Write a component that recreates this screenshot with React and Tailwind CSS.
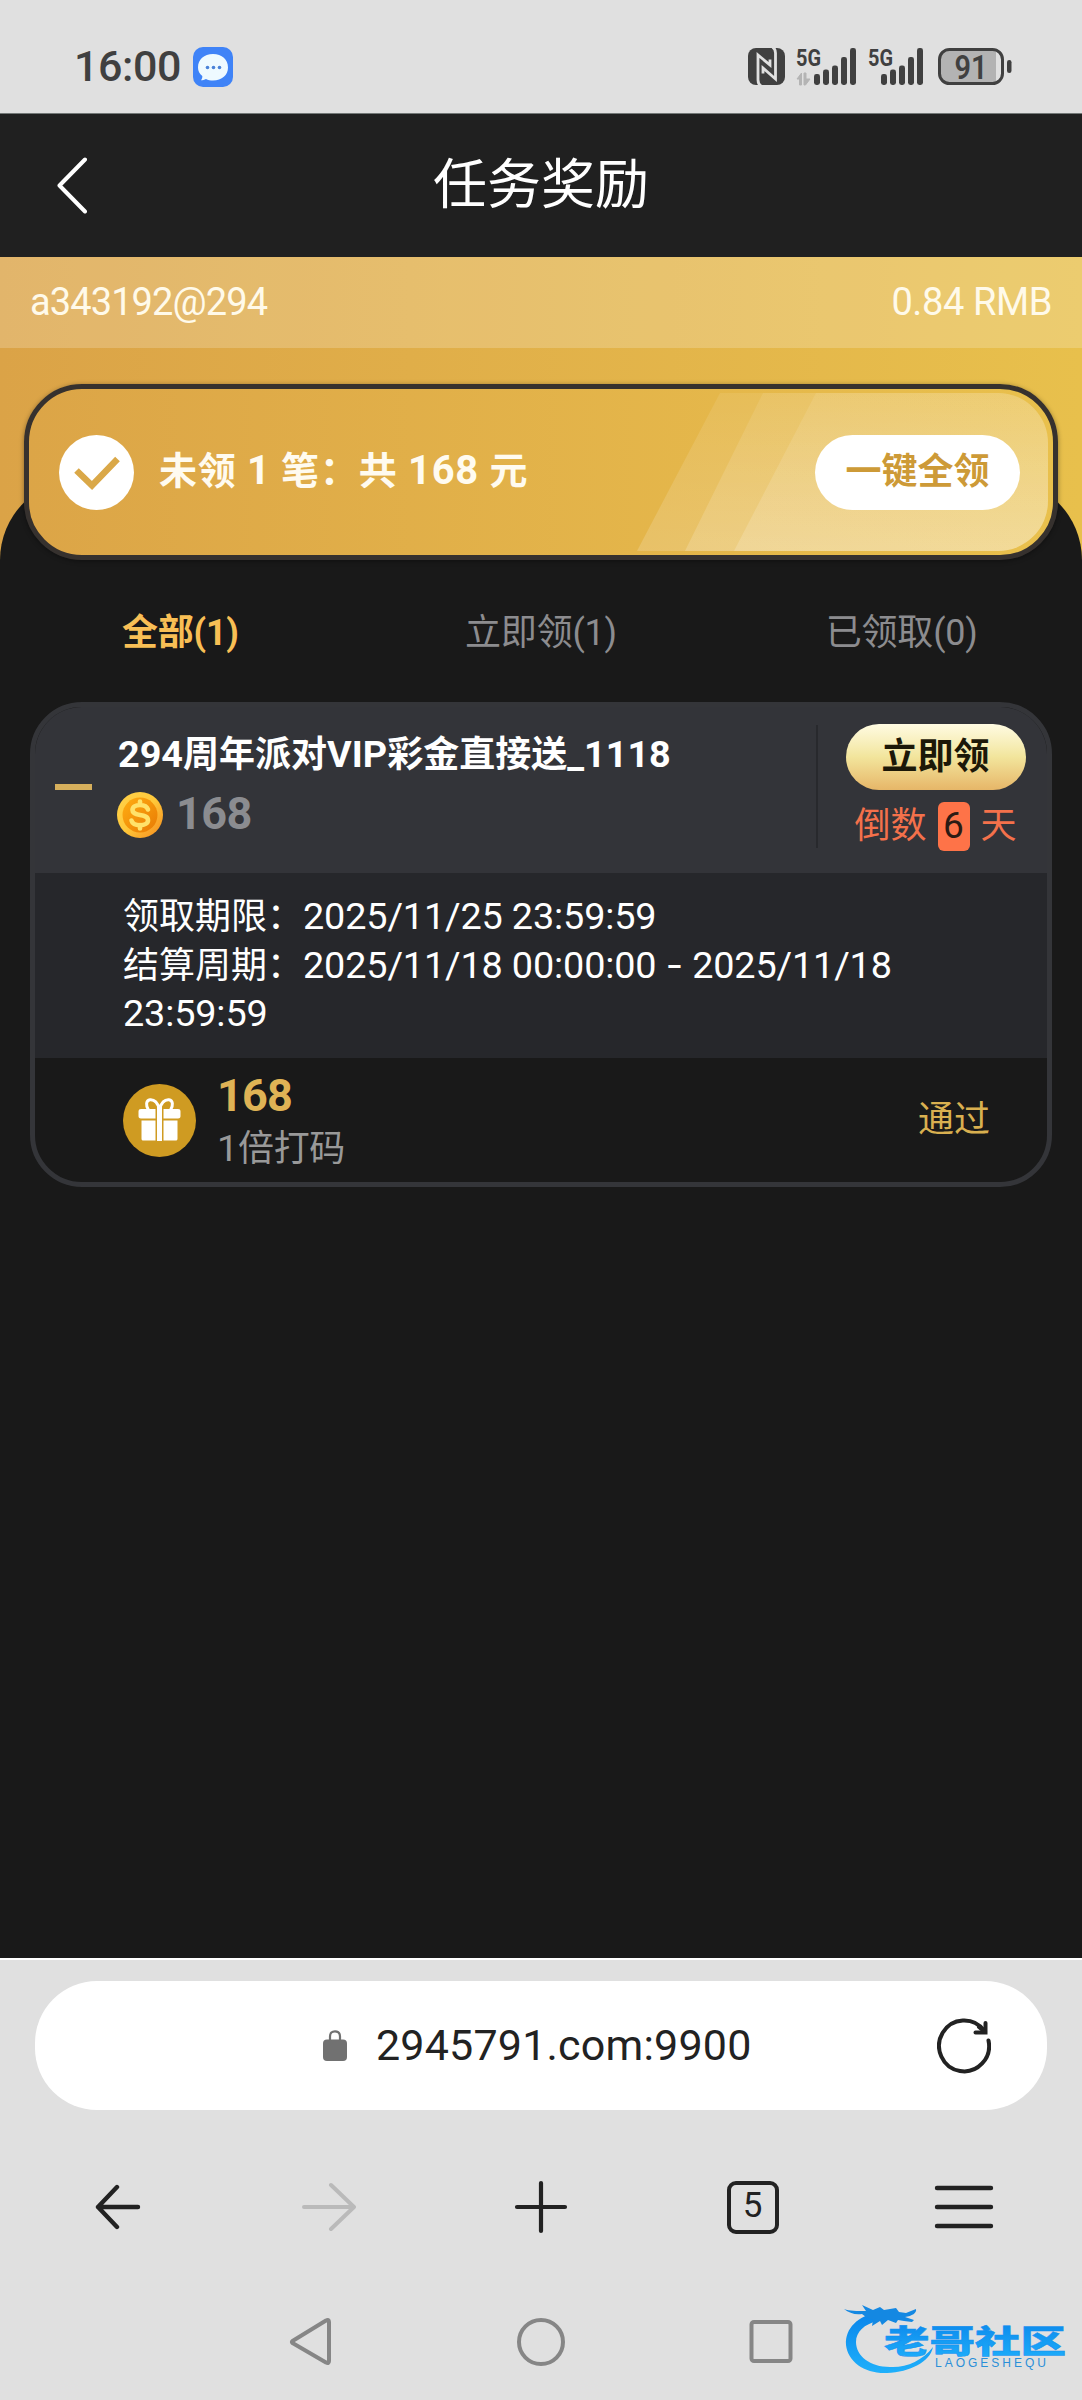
import React, { useState } from 'react';

const tabs = [
    { id: 'all', label: '全部', count: 1 },
    { id: 'pending', label: '立即领', count: 1 },
    { id: 'received', label: '已领取', count: 0 },
];

const reward = {
    amount: 168,
    daysLeft: 6,
    deadline: '2025/11/25 23:59:59',
    periodStart: '2025/11/18 00:00:00',
    periodEnd: '2025/11/18 23:59:59',
};

// x offset, height of each bar
const signalBars = [
    [0, 11],
    [9, 15.5],
    [18, 19.5],
    [27, 28],
    [36, 37],
];

const SignalIcon = ({ offset, data }) => (
    <svg className="h-[37px] w-[61px] shrink-0 overflow-visible" viewBox="0 0 61 37" fill="#404040">
        <text x="0" y="18" fontSize="24" fontWeight="700" fontFamily="Roboto, sans-serif" textLength="25" lengthAdjust="spacingAndGlyphs">5G</text>
        {signalBars.map(([x, h]) => (
            <rect key={x} x={x + offset} y={37 - h} width="6" height={h} rx="2.4" />
        ))}
        {data && <path d="M1 31 L5.5 25 V37 H3.5 V31 Z M8 25 H10 V31 H14 L9.5 37 H8 Z" fill="#b4b4b4" stroke="#b4b4b4" />}
    </svg>
);

const StatusBar = () => (
    <div className="flex h-[114px] items-center border-b border-[#737877] bg-[#e0e0e0] pt-[20px] pr-[70px] pl-[74px]">
        <span className="w-[119px] text-[43px] leading-none font-medium tracking-[-0.4px] text-[#404040]">16:00</span>
        <svg className="h-10 w-10" viewBox="0 0 40 40">
            <rect width="40" height="40" rx="10" fill="#3f83f7" />
            <path d="M20 7 C29 7 35 12.500 35 20.500 C35 28 29 33.500 20 33.500 C17.500 33.500 15 33 13 32 C11.500 32.800 9.500 33.300 8 33.300 C9 32 9.500 30.500 9.300 29 C6.500 26.800 5 24 5 20.500 C5 12.500 11 7 20 7 Z" fill="#eefaff" />
            <circle cx="14.500" cy="20.500" r="1.800" fill="#4a82d8" />
            <circle cx="20.500" cy="20.500" r="1.800" fill="#4a82d8" />
            <circle cx="26.500" cy="20.500" r="1.800" fill="#4a82d8" />
        </svg>
        <div className="ml-auto flex items-center">
            <svg className="mr-[11px] h-[37px] w-[37px]" viewBox="0 0 37 37" fill="none">
                <rect width="37" height="37" rx="8" fill="#404040" />
                <path d="M13 38 C10.500 36.500 10 34.500 10 32 V7 L22 17 V11.500" stroke="#e0e0e0" strokeWidth="2.800" />
                <path d="M24.500 -1 C27 0.500 27.500 2.500 27.500 5 V31 L15 20 V25.500" stroke="#e0e0e0" strokeWidth="2.800" />
            </svg>
            <SignalIcon offset={18} data />
            <div className="ml-[11px] flex"><SignalIcon offset={13} /></div>
            <svg className="ml-[9px] h-[37px] w-[74px]" viewBox="0 0 74 37">
                <path d="M12 1.500 H58 V35.500 H12 C5 35.500 1.500 32 1.500 26 V11 C1.500 5 5 1.500 12 1.500 Z" fill="#b3b3b3" />
                <rect x="1.500" y="1.500" width="63" height="34" rx="10" fill="none" stroke="#404040" strokeWidth="3" />
                <rect x="69" y="12" width="4.500" height="13" rx="2.200" fill="#404040" />
                <text x="33" y="30.500" textAnchor="middle" fontSize="34" fontWeight="600" fontFamily="Roboto, sans-serif" fill="#404040" textLength="33" lengthAdjust="spacingAndGlyphs">91</text>
            </svg>
        </div>
    </div>
);

const Header = () => (
    <header className="flex h-[143px] items-center bg-[#202020] pr-[87px] pl-[57px] text-white">
        <svg className="h-[57px] w-[30px]" viewBox="0 0 30 57" fill="none" stroke="currentColor" strokeWidth="4" strokeLinecap="round" strokeLinejoin="round">
            <path d="M28 2.500 L2.500 28.500 L28 54.500" />
        </svg>
        <h1 className="flex-1 text-center text-[54px] leading-none">任务奖励</h1>
    </header>
);

const ClaimBanner = () => (
    <div className="relative mx-6 flex h-[176px] items-center overflow-hidden rounded-[58px] border-[5px] border-[#36312e] bg-linear-to-r from-[#dca547] to-[#e9c04c] pr-[33px] pl-[30px] shadow-[0_1px_5px_rgba(0,0,0,0.4)]">
        <svg className="absolute top-[4px] right-[3px] h-[158px] w-[416px]" viewBox="0 0 416 158">
            <defs>
                <linearGradient id="shine" x1="0" y1="0" x2="0" y2="1">
                    <stop offset="0" stopColor="#fff" stopOpacity="0.08" />
                    <stop offset="1" stopColor="#fff" stopOpacity="0.17" />
                </linearGradient>
                <clipPath id="round">
                    <rect x="-100" width="514" height="158" rx="50" />
                </clipPath>
            </defs>
            <g fill="url(#shine)" clipPath="url(#round)">
                <path d="M86 0 H416 V158 H3 Z" />
                <path d="M129 0 H416 V158 H51 Z" />
                <path d="M182 0 H416 V158 H100 Z" />
            </g>
        </svg>
        <svg className="h-[75px] w-[75px]" viewBox="0 0 75 75">
            <circle cx="37.500" cy="37.500" r="37.500" fill="#fff" />
            <path d="M17.500 35.500 L33 50.500 L58.500 24" fill="none" stroke="#daa848" strokeWidth="6.500" />
        </svg>
        <p className="ml-[25px] pb-[3px] text-[38px] leading-none font-bold tracking-[0.85px] text-[#fffbf0]">
            未领 <Num>1</Num> 笔：共 <Num>168</Num> 元
        </p>
        <button className="relative ml-auto h-[75px] w-[205px] rounded-full bg-white text-[36px] leading-none font-bold text-[#cd9a37]">
            一键全领
        </button>
    </div>
);

// latin digits sit a touch larger than the chinese text around them
const Num = ({ children }) => <span className="text-[1.05em] leading-none">{children}</span>;

const CoinIcon = () => (
    <svg className="h-[46px] w-[46px]" viewBox="0 0 46 46">
        <defs>
            <linearGradient id="rim" x1="0" y1="0" x2="1" y2="1">
                <stop offset="0" stopColor="#ffd24a" />
                <stop offset="0.5" stopColor="#ffc83a" />
                <stop offset="1" stopColor="#f58a1c" />
            </linearGradient>
            <linearGradient id="face" x1="0" y1="0" x2="1" y2="1">
                <stop offset="0" stopColor="#ffae12" />
                <stop offset="1" stopColor="#e87a04" />
            </linearGradient>
        </defs>
        <circle cx="23" cy="23" r="23" fill="url(#rim)" />
        <circle cx="23" cy="23" r="17.500" fill="url(#face)" />
        <path d="M23 9.500 V13 M23 33 V36.500 M31 17.500 C30 14.500 27 13 23 13 C18.500 13 15.500 15 15.500 18 C15.500 21.500 19 22.300 23 23 C27.500 23.800 31 24.600 31 28.200 C31 31.300 27.500 33.200 23 33.200 C18.500 33.200 15.300 31.500 14.500 28.500" fill="none" stroke="#ffe26a" strokeWidth="4.600" strokeLinecap="round" />
    </svg>
);

const GiftIcon = () => (
    <svg className="h-[73px] w-[73px]" viewBox="0 0 73 73">
        <circle cx="36.500" cy="36.500" r="36.500" fill="#cf9b22" />
        <path d="M36.500 25 C34 17 30 15.500 27 15.800 C23 16.300 22.500 21.500 25.500 26 M36.500 25 C39 17 43 15.500 46 15.800 C50 16.300 50.500 21.500 47.500 26" fill="none" stroke="#fff" strokeWidth="3" />
        <path d="M18 25 H32.500 V34.500 H18 C16 34.500 15.500 33.500 15.500 32 V27.500 C15.500 25.800 16.500 25 18 25 Z M40.500 25 H55 C56.800 25 57.500 25.800 57.500 27.500 V32 C57.500 33.500 57 34.500 55 34.500 H40.500 Z" fill="#fff" />
        <path d="M18.500 36.500 H32.500 V56.500 H20.500 C19 56.500 18.500 56 18.500 54.500 Z M40.500 36.500 H54.500 V54.500 C54.500 56 54 56.500 52.500 56.500 H40.500 Z" fill="#fff" />
        <rect x="34" y="23" width="5" height="34" fill="#fff" />
    </svg>
);

const RewardCard = () => {
    const [open, setOpen] = useState(true);

    return (
        <section className="mx-[30px] overflow-hidden rounded-[52px] border-[5px] border-[#343539] bg-[#191919]">
            <div className="flex h-[166px] bg-[#333439]">
                <button className="flex w-[82px] items-center pb-[6px] pl-5" onClick={() => setOpen(!open)}>
                    <span className="h-[6px] w-[37px] bg-[#d6af5c]" />
                </button>
                <div className="flex-1 pt-[28px]">
                    <h2 className="pl-px text-[36px] leading-[40px] font-bold whitespace-nowrap text-white">
                        <Num>294</Num>周年派对<Num>VIP</Num>彩金直接送<Num>_1118</Num>
                    </h2>
                    <div className="mt-[16px] flex items-center">
                        <CoinIcon />
                        <span className="ml-[13px] pb-[3px] text-[45px] leading-none font-bold tracking-[-0.6px] text-[#8b8c90]">{reward.amount}</span>
                    </div>
                </div>
                <div className="mt-[18px] h-[123px] w-[2px] bg-[#28292d]" />
                <div className="flex w-[229px] flex-col items-center pt-[17px] pl-[6px]">
                    <button className="h-[66px] w-[180px] rounded-full bg-linear-to-b from-[#fffbe2] via-[#f2e59c] to-[#e6b668] text-[36px] leading-none font-bold text-[#1c1808]">
                        立即领
                    </button>
                    <div className="mt-3 flex items-center text-[36px] leading-none text-[#f4714b]">
                        <span className="pb-[2px]">倒数</span>
                        <span className="mx-[11px] flex h-[49px] w-8 items-center justify-center rounded-md bg-[#fe7348] pb-[2px] text-[37px] text-[#2b1b14]">{reward.daysLeft}</span>
                        <span className="pb-[2px]">天</span>
                    </div>
                </div>
            </div>
            {open && (
                <>
                    <div className="h-[185px] bg-[#26272b] pt-[20px] pr-[110px] pl-[88px] text-[36px] leading-[48.500px] text-white">
                        <p>领取期限：<Num><span className="tracking-[-0.15px]">{reward.deadline}</span></Num></p>
                        <p>结算周期：<Num><span className="tracking-[-0.15px]">{reward.periodStart} <span className="font-[Inter,sans-serif]">-</span> {reward.periodEnd}</span></Num></p>
                    </div>
                    <div className="flex h-[124px] items-center pr-[57px] pl-[88px]">
                        <GiftIcon />
                        <div className="ml-[21px] pt-[4px]">
                            <p className="text-[45px] leading-[48px] font-bold tracking-[-0.8px] text-[#dfb355]">{reward.amount}</p>
                            <p className="mt-[5px] text-[36px] leading-[48px] tracking-[-0.3px] text-[#999]"><Num>1</Num>倍打码</p>
                        </div>
                        <span className="ml-auto text-[36px] leading-none text-[#d9b050]">通过</span>
                    </div>
                </>
            )}
        </section>
    );
};

const BrowserBar = () => (
    <div className="h-[322px] border-t-2 border-white bg-[#e0e0e0] pt-[21px]">
        <div className="mx-[35px] flex h-[129px] items-center rounded-[62px] bg-white pr-[56px] pl-[288px] text-[#222]">
            <svg className="h-[31px] w-[24px]" viewBox="0 0 24 31">
                <rect y="9.500" width="24" height="21.500" rx="4" fill="#717171" />
                <path d="M7 11 V6.500 C7 3 9 1.300 12 1.300 C15 1.300 17 3 17 6.500 V11" fill="none" stroke="#717171" strokeWidth="2.200" />
            </svg>
            <span className="ml-[29px] text-[43px] leading-none tracking-[0.2px]">2945791.com:9900</span>
            <svg className="ml-auto h-[56px] w-[54px]" viewBox="0 0 54 56" fill="none" stroke="currentColor" strokeWidth="4" strokeLinecap="round">
                <path d="M51.500 22.500 A25 25.500 0 1 1 47 12.500" />
                <path d="M48.500 5 V14.500 H38.500" />
                <path d="M42 9 L48 14" />
            </svg>
        </div>
        <div className="mx-[12px] mt-[70px] flex h-[54px] items-center text-[#222]">
            <div className="flex flex-1 justify-center">
                <svg className="h-[54px] w-[46px]" viewBox="0 0 46 54" fill="none" stroke="currentColor" strokeWidth="4.400" strokeLinecap="round" strokeLinejoin="round">
                    <path d="M43 27 H3 M22 7 L3 27 L22 47" />
                </svg>
            </div>
            <div className="flex flex-1 justify-center text-[#bababa]">
                <svg className="h-[54px] w-[54px]" viewBox="0 0 54 54" fill="none" stroke="currentColor" strokeWidth="4" strokeLinecap="round" strokeLinejoin="round">
                    <path d="M2 27 H52 M29 5 L52 27 L29 49" />
                </svg>
            </div>
            <div className="flex flex-1 justify-center">
                <svg className="h-[54px] w-[54px]" viewBox="0 0 54 54" fill="none" stroke="currentColor" strokeWidth="4.200" strokeLinecap="round">
                    <path d="M3 27 H51 M27 3 V51" />
                </svg>
            </div>
            <div className="flex flex-1 justify-center">
                <span className="flex h-[53px] w-[52px] items-center justify-center rounded-[9px] border-[4px] border-[#222] pb-[3px] text-[35px] leading-none">5</span>
            </div>
            <div className="flex flex-1 justify-center">
                <svg className="h-[54px] w-[60px]" viewBox="0 0 60 54" fill="none" stroke="currentColor" strokeWidth="4.400" strokeLinecap="round">
                    <path d="M3 8 H57 M3 27 H57 M3 46 H57" />
                </svg>
            </div>
        </div>
    </div>
);

const SystemNav = () => (
    <div className="relative flex h-[120px] flex-1 bg-[#e0e0e0] pt-[37px] pl-[289px] text-[#868686]">
        <svg className="h-[50px] w-[44px]" viewBox="0 0 44 50" fill="none" stroke="currentColor" strokeWidth="4" strokeLinejoin="round">
            <path d="M3.500 24 L37 3.500 C39 2.500 40 3 40 5 V44 C40 46 39 46.500 37 45.500 L3.500 26 C2.500 25 2.500 25 3.500 24 Z" />
        </svg>
        <svg className="ml-[183px] h-[50px] w-[50px]" viewBox="0 0 50 50" fill="none" stroke="currentColor" strokeWidth="4">
            <circle cx="25" cy="25" r="22" />
        </svg>
        <svg className="ml-[181px] h-[50px] w-[50px]" viewBox="0 0 50 50" fill="none" stroke="currentColor" strokeWidth="4">
            <rect x="4.500" y="5" width="39" height="39" rx="2.500" />
        </svg>
        {/* community logo stamped over the corner */}
        <svg className="absolute top-[20px] right-[10px] h-[80px] w-[230px]" viewBox="0 0 230 80">
            <defs>
                <linearGradient id="logo" x1="0" y1="0" x2="0" y2="1">
                    <stop offset="0" stopColor="#0a84ea" />
                    <stop offset="1" stopColor="#1fb0fb" />
                </linearGradient>
            </defs>
            <path d="M36 12 C16 16 3 28 4 45 C6 62 23 74 45 73 C68 72 88 62 91 47 C80 61 64 68 48 67 C28 67 14 56 14 42 C14 32 22 24 36 21 Z" fill="url(#logo)" />
            <path d="M2 9 C8 11 14 11 24 11 L20 5 L31 10 L38 7 L42 10 L54 8 L57 12 L64 13 L74 9 C75 13 70 16 63 17 L72 20 L70 22 L62 21 L56 20 L54 23 L46 20 L40 25 L38 21 L30 26 L31 20 L24 17 L20 14 C13 15 7 13 2 9 Z" fill="#1488e2" />
            <text x="42" y="53" fontSize="32" fontWeight="900" fontFamily="'Noto Sans CJK SC', sans-serif" fill="url(#logo)" stroke="#148ff0" strokeWidth="0.500" textLength="182" lengthAdjust="spacingAndGlyphs">老哥社区</text>
            <text x="93" y="67" fontSize="12" fontFamily="'Liberation Sans', sans-serif" fill="#2a8fd8" textLength="111">LAOGESHEQU</text>
        </svg>
    </div>
);

const App = () => {
    const [activeTab, setActiveTab] = useState('all');

    return (
        <div className="flex h-[2400px] w-[1082px] flex-col overflow-hidden bg-[#191919] font-[Roboto,'Noto_Sans_CJK_SC',sans-serif]">
            <StatusBar />
            <Header />
            <main className="flex-1 bg-linear-to-r from-[#dba347] to-[#e8c04c]">
                <div className="flex h-[91px] items-center justify-between bg-white/20 px-[30px] pb-[2px] text-[38px] leading-none text-[#fffaea]">
                    <span className="tracking-[-0.9px]">a343192@294</span>
                    <span className="tracking-[-0.4px]">0.84 RMB</span>
                </div>
                <div className="h-[131px] pt-9">
                    <ClaimBanner />
                </div>
                <div className="h-[1479px] rounded-t-[81px] bg-[#191919] pt-[116px]">
                    <div className="mb-[31px] flex h-[76px] items-center">
                        {tabs.map(tab => (
                            <button
                                key={tab.id}
                                onClick={() => setActiveTab(tab.id)}
                                className={`flex-1 text-center text-[36px] leading-none tracking-[-0.2px] ${activeTab === tab.id ? 'font-bold text-[#f8bf55]' : 'text-[#8c8c8f]'}`}
                            >
                                {`${tab.label}(${tab.count})`}
                            </button>
                        ))}
                    </div>
                    <RewardCard />
                </div>
            </main>
            <BrowserBar />
            <SystemNav />
        </div>
    );
};

export default App;
